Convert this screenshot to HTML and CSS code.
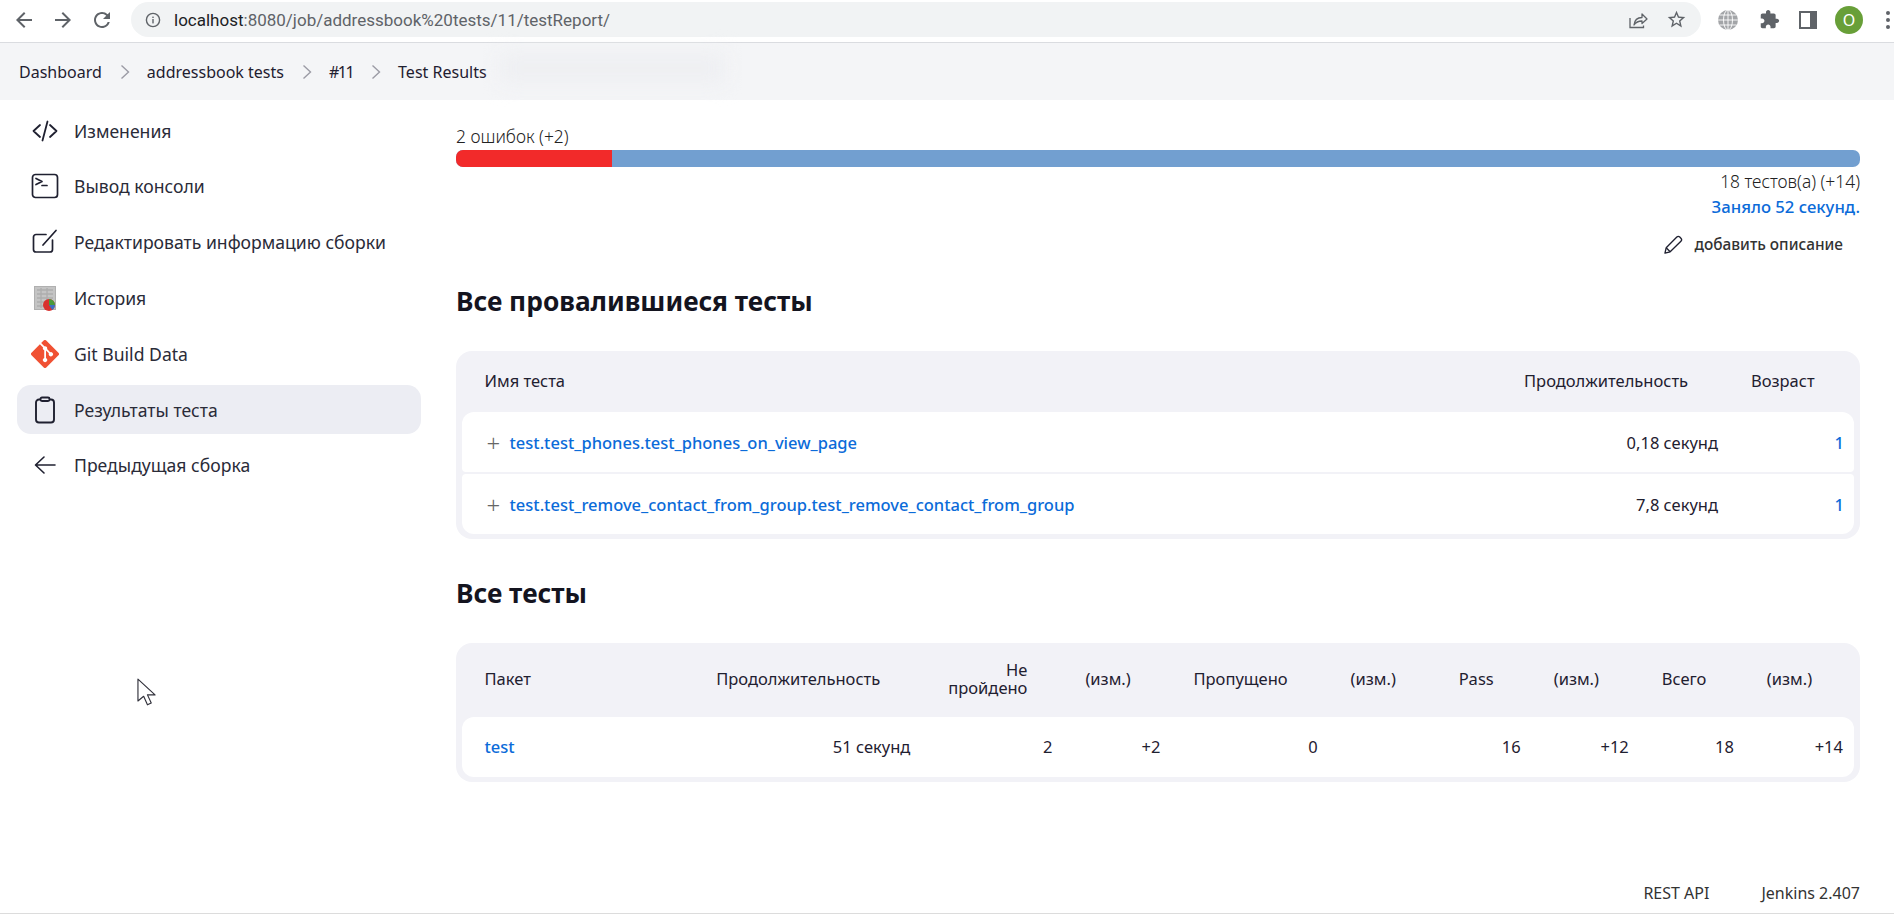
FILE: index.html
```html
<!DOCTYPE html>
<html lang="en">
<head>
    <meta charset="UTF-8">
    <meta name="viewport" content="width=device-width, initial-scale=1.0">
    <title>Test Results</title>
    <link rel="stylesheet" href="styles.css">
</head>
<body>

<div class="page">
  <div class="browser-bar">
    <div class="nav-buttons">
      <svg class="chrome-icon" viewBox="0 0 24 24"><path d="M20 11H7.83l5.59-5.59L12 4l-8 8 8 8 1.41-1.41L7.83 13H20v-2z"/></svg>
      <svg class="chrome-icon" viewBox="0 0 24 24"><path d="M12 4l-1.41 1.41L16.17 11H4v2h12.17l-5.58 5.59L12 20l8-8z"/></svg>
      <svg class="chrome-icon" viewBox="0 0 24 24"><path d="M17.65 6.35A7.958 7.958 0 0 0 12 4c-4.42 0-7.99 3.58-7.99 8s3.57 8 7.99 8c3.73 0 6.84-2.55 7.73-6h-2.08A5.99 5.99 0 0 1 12 18c-3.31 0-6-2.69-6-6s2.69-6 6-6c1.66 0 3.14.69 4.22 1.78L13 11h7V4l-2.35 2.35z"/></svg>
    </div>
    <div class="url-pill">
      <svg class="info-icon" viewBox="0 0 16 16"><circle cx="8" cy="8" r="6.6" fill="none" stroke="#5f6368" stroke-width="1.4"/><rect x="7.3" y="7" width="1.4" height="4.4" fill="#5f6368"/><rect x="7.3" y="4.6" width="1.4" height="1.4" fill="#5f6368"/></svg>
      <span class="url"><span class="url-host">localhost</span>:8080/job/addressbook%20tests/11/testReport/</span>
      <svg class="share-icon" viewBox="0 0 20 20" fill="none" stroke="#5f6368" stroke-width="1.3"><path d="M2 8v9.5h13.5v-2"/><path d="M6 15c.5-4.500 3.500-7.500 8-7.500V4l5 5-5 4.500V11c-3.500 0-6 1-8 4z" stroke-linejoin="round"/></svg>
      <svg class="star-icon" viewBox="0 0 24 24"><path d="M22 9.24l-7.19-.62L12 2 9.19 8.63 2 9.24l5.46 4.73L5.82 21 12 17.27 18.18 21l-1.63-7.03L22 9.24zM12 15.4l-3.760 2.27 1-4.28-3.32-2.88 4.38-.38L12 6.1l1.71 4.04 4.38.38-3.32 2.88 1 4.28L12 15.4z"/></svg>
    </div>
    <div class="toolbar">
      <svg class="globe-icon" viewBox="0 0 20 20" fill="none" stroke="#fff" stroke-width=".9"><circle cx="10" cy="10" r="10" fill="#a3a5a8" stroke="none"/><ellipse cx="10" cy="10" rx="4.500" ry="10"/><path d="M10 0v20M0 10h20M1.500 5h17M1.500 15h17"/></svg>
      <svg class="puzzle-icon" viewBox="0 0 24 24"><path d="M20.500 11H19V7c0-1.100-.9-2-2-2h-4V3.500C13 2.120 11.880 1 10.500 1S8 2.120 8 3.500V5H4c-1.100 0-1.990.9-1.990 2v3.800H3.500c1.490 0 2.700 1.210 2.700 2.700s-1.210 2.700-2.700 2.700H2V20c0 1.100.9 2 2 2h3.800v-1.500c0-1.490 1.210-2.700 2.700-2.700 1.490 0 2.700 1.210 2.700 2.700V22H17c1.100 0 2-.9 2-2v-4h1.500c1.380 0 2.500-1.120 2.500-2.500S21.880 11 20.500 11z"/></svg>
      <div class="side-panel"><div class="side-panel-fill"></div></div>
      <div class="avatar">O</div>
      <div class="dots"><i></i><i></i><i></i></div>
    </div>
  </div>

  <div class="crumbs">
    <a>Dashboard</a>
    <svg class="chevron" viewBox="0 0 10 16"><path d="M1.500 1.500 8.500 8l-7 6.500"/></svg>
    <a>addressbook tests</a>
    <svg class="chevron" viewBox="0 0 10 16"><path d="M1.500 1.500 8.500 8l-7 6.500"/></svg>
    <a class="crumb-tight">#11</a>
    <svg class="chevron" viewBox="0 0 10 16"><path d="M1.500 1.500 8.500 8l-7 6.500"/></svg>
    <a>Test Results</a>
    <div class="crumb-smear"></div>
  </div>

  <div class="main">
    <nav class="sidebar">
      <a class="side-item">
        <svg class="side-icon" viewBox="0 0 28 28" fill="none" stroke="#1f2030" stroke-width="1.800" stroke-linecap="round" stroke-linejoin="round"><path d="M9 8 2.500 14 9 20M19 8l6.500 6-6.500 6M16.500 4.500l-5 19"/></svg>
        Изменения
      </a>
      <a class="side-item">
        <svg class="side-icon" viewBox="0 0 28 28" fill="none" stroke="#1f2030" stroke-width="1.700" stroke-linecap="round" stroke-linejoin="round"><rect x="1.500" y="2.500" width="25" height="23" rx="3"/><path d="M5 6.500l6 3-6 3M11 13.500h5"/></svg>
        Вывод консоли
      </a>
      <a class="side-item">
        <svg class="side-icon" viewBox="0 0 28 28" fill="none" stroke="#1f2030" stroke-width="1.700" stroke-linecap="round" stroke-linejoin="round"><path d="M15 6.500H5A2.500 2.500 0 0 0 2.500 9v12.500A2.500 2.500 0 0 0 5 24h14a2.500 2.500 0 0 0 2.500-2.500V12"/><path d="M12 17 25 2.500"/></svg>
        Редактировать информацию сборки
      </a>
      <a class="side-item">
        <svg class="side-icon" viewBox="0 0 28 28"><rect x="3.500" y="2.500" width="21" height="23" fill="#c4c4c4" stroke="#b0b0b0"/><path d="M6 6h16M6 10h16M6 14h16M6 18h16M6 22h16M10 4v20M16 4v20" stroke="#adadad" stroke-width="1.300"/><circle cx="18" cy="21" r="6" fill="#d8312e"/><path d="M18 21v-6a6 6 0 0 1 6 6z" fill="#4a9a3c"/><path d="M18 21h6a6 6 0 0 1-2.800 5z" fill="#3b6fc4"/></svg>
        История
      </a>
      <a class="side-item">
        <svg class="side-icon" viewBox="0 0 92 92"><path fill="#f05133" d="M90.156 41.965 50.036 1.848a5.918 5.918 0 0 0-8.372 0l-8.328 8.332 10.566 10.566a7.030 7.030 0 0 1 7.230 1.684 7.034 7.034 0 0 1 1.669 7.277l10.187 10.184a7.028 7.028 0 0 1 7.278 1.672 7.040 7.040 0 0 1 0 9.957 7.050 7.050 0 0 1-9.965 0 7.044 7.044 0 0 1-1.528-7.660l-9.500-9.497V59.360a7.040 7.040 0 0 1 1.860 1.332 7.040 7.040 0 0 1 0 9.957 7.040 7.040 0 0 1-9.957 0 7.040 7.040 0 0 1 0-9.957 7.060 7.060 0 0 1 2.304-1.539V33.926a7.049 7.049 0 0 1-3.820-9.234L29.242 14.272 1.730 41.777a5.925 5.925 0 0 0 0 8.371L41.852 90.270a5.925 5.925 0 0 0 8.370 0l39.934-39.934a5.925 5.925 0 0 0 0-8.371"/></svg>
        Git Build Data
      </a>
      <a class="side-item side-item-active">
        <svg class="side-icon" viewBox="0 0 28 28" fill="none" stroke="#1f2030" stroke-width="1.900" stroke-linejoin="round"><rect x="5" y="3.500" width="18" height="23" rx="3"/><rect x="9.500" y="1.500" width="9" height="3.500" rx="1.500" fill="#ecedf3"/></svg>
        Результаты теста
      </a>
      <a class="side-item">
        <svg class="side-icon" viewBox="0 0 28 28" fill="none" stroke="#1f2030" stroke-width="1.600" stroke-linecap="round" stroke-linejoin="round"><path d="M24 14H5M13 6l-8.500 8 8.500 8"/></svg>
        Предыдущая сборка
      </a>
    </nav>

    <div class="content">
      <div class="fail-count">2 ошибок (+2)</div>
      <div class="progress"><div class="progress-fail"></div></div>
      <div class="test-count">18 тестов(а) (+14)</div>
      <div class="took">Заняло 52 секунд.</div>
      <div class="add-desc">
        <svg class="pencil" viewBox="0 0 20 20" fill="none" stroke="#1f2030" stroke-width="1.400" stroke-linejoin="round"><path d="M1 19l1.300-5.500L13.500 2.200a2.200 2.200 0 0 1 3.100 0l1.200 1.200a2.200 2.200 0 0 1 0 3.100L6.500 17.700z"/><path d="M2.300 13.500l4.200 4.200"/></svg>
        добавить описание
      </div>

      <h1 class="section-title">Все провалившиеся тесты</h1>
      <div class="table-box">
        <table class="tests">
          <colgroup><col><col class="col-228"><col class="col-131"></colgroup>
          <thead class="head-short">
            <tr><th>Имя теста</th><th>Продолжительность</th><th>Возраст</th></tr>
          </thead>
          <tbody>
            <tr>
              <td><span class="expand">+</span><a class="link">test.test_phones.test_phones_on_view_page</a></td>
              <td>0,18 секунд</td>
              <td><a class="link">1</a></td>
            </tr>
            <tr>
              <td><span class="expand">+</span><a class="link">test.test_remove_contact_from_group.test_remove_contact_from_group</a></td>
              <td>7,8 секунд</td>
              <td><a class="link">1</a></td>
            </tr>
          </tbody>
        </table>
      </div>

      <h1 class="section-title section-title-second">Все тесты</h1>
      <div class="table-box">
        <table class="tests">
          <colgroup>
            <col class="col-226"><col class="col-228"><col class="col-142"><col class="col-108"><col class="col-157">
            <col class="col-108"><col class="col-95"><col class="col-108"><col class="col-105"><col class="col-115">
          </colgroup>
          <thead class="head-tall">
            <tr>
              <th>Пакет</th><th>Продолжительность</th><th class="th-right">Не пройдено</th><th>(изм.)</th><th>Пропущено</th>
              <th>(изм.)</th><th>Pass</th><th>(изм.)</th><th>Всего</th><th>(изм.)</th>
            </tr>
          </thead>
          <tbody class="body-tight">
            <tr>
              <td><a class="link">test</a></td><td>51 секунд</td><td>2</td><td>+2</td><td>0</td>
              <td></td><td>16</td><td>+12</td><td>18</td><td>+14</td>
            </tr>
          </tbody>
        </table>
      </div>
    </div>
  </div>

  <footer class="footer">
    <a>REST API</a>
    <a>Jenkins 2.407</a>
  </footer>
</div>

<svg class="cursor" viewBox="0 0 20 30"><path d="M1 1v23l6-5 4 9 4-2-4-8.500h8z" fill="#fff" stroke="#30303a" stroke-width="1.200" stroke-linejoin="round"/></svg>

</body>
</html>
```

FILE: styles.css
```css
body {
    margin: 0;
    overflow: hidden;
    background: #fff;
    color: #1f2030;
    font-family: "Noto Sans", "Open Sans", sans-serif;
    font-size: 16.500px;
}
a {
    color: inherit;
    text-decoration: none;
}
.page {
    display: flex;
    flex-direction: column;
    height: 918px;
}

/* browser chrome */
.browser-bar {
    display: flex;
    align-items: center;
    flex: none;
    height: 43px;
    padding-bottom: 3px;
    box-sizing: border-box;
    border-bottom: 1px solid #dadce0;
}
.nav-buttons {
    display: flex;
    gap: 15px;
    width: 131px;
    padding-left: 12px;
    box-sizing: border-box;
}
.chrome-icon {
    width: 24px;
    height: 24px;
    fill: #5f6368;
}
.url-pill {
    display: flex;
    align-items: center;
    flex: none;
    width: 1570px;
    height: 35px;
    padding: 0 14px 0 14px;
    box-sizing: border-box;
    border-radius: 18px;
    background: #f1f3f4;
}
.info-icon {
    width: 16px;
    height: 16px;
    margin-right: 13px;
}
.url {
    flex: 1;
    padding-top: 1px;
    font-family: "Roboto", sans-serif;
    font-size: 17px;
    color: #5f6368;
}
.url-host {
    color: #202124;
}
.share-icon {
    width: 20px;
    height: 20px;
    margin-right: 18px;
}
.star-icon {
    width: 21px;
    height: 21px;
    fill: #5f6368;
}
.toolbar {
    display: flex;
    align-items: center;
    flex: 1;
    padding-left: 17px;
}
.globe-icon {
    width: 20px;
    height: 20px;
    margin-right: 21px;
}
.puzzle-icon {
    width: 21px;
    height: 21px;
    fill: #5f6368;
    margin-right: 19px;
}
.side-panel {
    display: flex;
    width: 14px;
    height: 14px;
    padding: 2px;
    margin-right: 18px;
    background: #5f6368;
}
.side-panel-fill {
    width: 9px;
    background: #fff;
}
.avatar {
    display: flex;
    align-items: center;
    justify-content: center;
    width: 28px;
    height: 28px;
    margin-right: 23px;
    border-radius: 50%;
    background: #689f38;
    color: #fff;
    font-size: 16px;
}
.dots {
    display: flex;
    flex-direction: column;
    flex: none;
    gap: 3px;
}
.dots i {
    display: block;
    width: 4px;
    height: 4px;
    border-radius: 50%;
    background: #5f6368;
}

/* breadcrumbs */
.crumbs {
    position: relative;
    display: flex;
    align-items: center;
    flex: none;
    height: 57px;
    padding-left: 19px;
    background: #f4f5f7;
    font-size: 16px;
    color: #1f2030;
}
.crumb-tight {
    letter-spacing: -1.500px;
}
.chevron {
    width: 10px;
    height: 16px;
    margin: 0 17px 0 18px;
    fill: none;
    stroke: #9b9ba5;
    stroke-width: 1.400;
}
.crumb-smear {
    position: absolute;
    left: 500px;
    top: 10px;
    width: 225px;
    height: 30px;
    background: #eeeff2;
    filter: blur(10px);
}

/* layout */
.main {
    display: flex;
    flex: 1;
}
.sidebar {
    display: flex;
    flex-direction: column;
    gap: 6.830px;
    width: 404px;
    margin-left: 17px;
    margin-right: 35px;
    padding-top: 6px;
}
.side-item {
    display: flex;
    align-items: center;
    height: 49px;
    padding-left: 14px;
    border-radius: 14px;
    color: #2a2b38;
    font-size: 17.600px;
}
.side-item-active {
    background: #ecedf3;
}
.side-icon {
    width: 28px;
    height: 28px;
    margin-right: 15px;
    flex: none;
}
.content {
    width: 1404px;
    padding-top: 26px;
}

/* summary */
.fail-count {
    line-height: 20px;
    font-size: 17.400px;
    font-weight: 300;
    color: #222;
}
.progress {
    height: 17px;
    margin-top: 4px;
    border-radius: 7px;
    overflow: hidden;
    background: #729fd0;
}
.progress-fail {
    width: 156px;
    height: 100%;
    background: #f22a2a;
}
.test-count {
    margin-top: 4px;
    line-height: 20px;
    text-align: right;
    font-size: 17.400px;
    font-weight: 300;
    color: #222;
}
.took {
    margin-top: 6px;
    line-height: 20px;
    text-align: right;
    color: #0b6bd9;
    font-size: 16.700px;
    font-weight: 500;
}
.add-desc {
    display: flex;
    align-items: center;
    justify-content: flex-end;
    height: 24px;
    margin-top: 15px;
    padding-right: 17px;
    font-size: 15.400px;
    font-weight: 500;
    color: #333;
}
.pencil {
    width: 19px;
    height: 19px;
    margin-right: 11px;
}
.section-title {
    margin: 27px 0 32px 0;
    font-size: 26.300px;
    line-height: 36px;
    font-weight: 700;
    color: #14141f;
}
.section-title-second {
    margin-top: 36px;
}

/* tables */
.table-box {
    padding: 0 6px 3px 5.500px;
    border-radius: 16px;
    background: #f2f2f7;
}
.tests {
    width: 100%;
    table-layout: fixed;
    border-collapse: separate;
    border-spacing: 0 2px;
}
.col-228 { width: 227px; }
.col-131 { width: 131px; }
.col-226 { width: 226.500px; }
.col-142 { width: 142px; }
.col-108 { width: 108px; }
.col-157 { width: 157px; }
.col-95 { width: 95px; }
.col-105 { width: 105px; }
.col-115 { width: 115px; }
.tests th {
    padding: 0 28px 2px 28px;
    font-weight: 400;
    text-align: left;
    line-height: 18px;
    color: #1f2030;
}
.tests th:first-child {
    padding-left: 23px;
}
.tests .th-right {
    padding-right: 30px;
    text-align: right;
}
.head-short tr {
    height: 57px;
}
.head-tall tr {
    height: 70px;
}
.tests td {
    height: 60px;
    padding: 1px 5px 0 0;
    box-sizing: border-box;
    background: #fff;
    text-align: right;
}
.tests td:first-child {
    padding-left: 23px;
    text-align: left;
    border-radius: 4px 0 0 4px;
}
.tests td:last-child {
    padding-right: 10px;
    border-radius: 0 4px 4px 0;
}
.tests .body-tight td {
    padding-top: 0;
    padding-bottom: 2px;
}
.tests .body-tight td:last-child {
    padding-right: 11px;
}
.tests tbody tr:first-child td:first-child { border-top-left-radius: 12px; }
.tests tbody tr:first-child td:last-child { border-top-right-radius: 12px; }
.tests tbody tr:last-child td:first-child { border-bottom-left-radius: 12px; }
.tests tbody tr:last-child td:last-child { border-bottom-right-radius: 12px; }
.link {
    color: #0b6bd9;
    font-weight: 500;
}
.expand {
    display: inline-block;
    width: 25px;
    padding-left: 2px;
    box-sizing: border-box;
    color: #666;
    font-size: 24px;
    font-weight: 300;
    line-height: 0;
    vertical-align: -3px;
}

/* footer */
.footer {
    display: flex;
    justify-content: flex-end;
    align-items: center;
    gap: 52px;
    flex: none;
    height: 40px;
    margin-bottom: 4px;
    padding-right: 34px;
    border-bottom: 1px solid #dcdcdc;
    font-size: 16px;
    color: #333;
}

.cursor {
    position: absolute;
    left: 137px;
    top: 678px;
    width: 19px;
    height: 29px;
}
```
